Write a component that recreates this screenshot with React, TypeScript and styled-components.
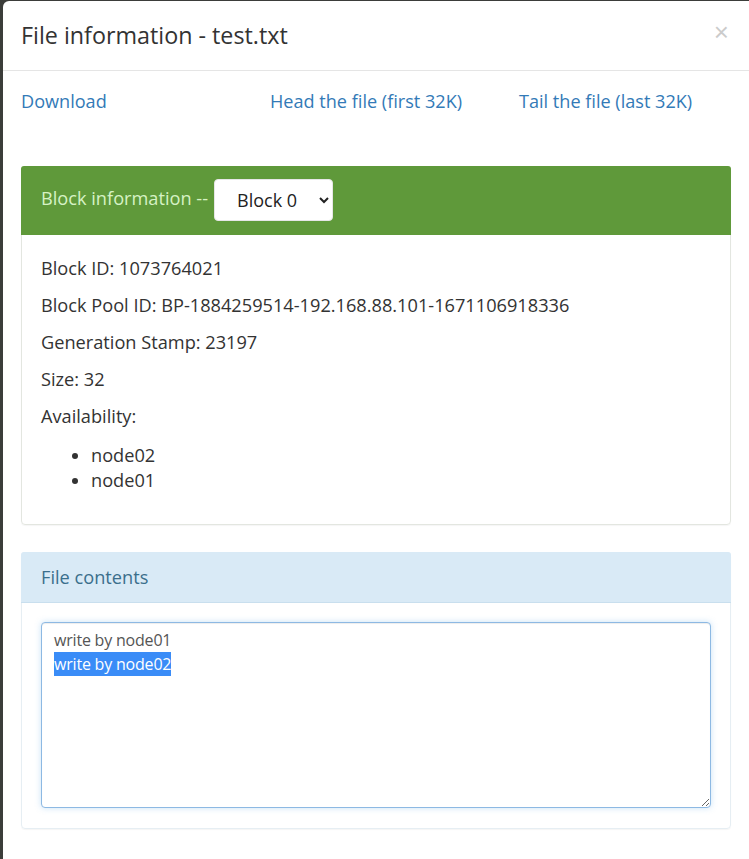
import React, { useEffect, useRef } from "react";
import styled, { createGlobalStyle } from "styled-components";

const Global = createGlobalStyle`
  html, body { margin: 0; padding: 0; }
  body {
    background: #3b3d3a;
    font-family: "Open Sans", "Noto Sans", sans-serif;
    color: #333;
    overflow: hidden;
  }
`;

const Modal = styled.div`
  margin: 1px 0 0 3px;
  background: #fff;
  border-top-left-radius: 6px;
  min-height: 858px;
`;

const Header = styled.div`
  height: 69px;
  border-bottom: 1px solid #e5e5e5;
  display: flex;
  align-items: center;
  justify-content: space-between;
  padding: 0 20px 0 18px;
`;

const Title = styled.h4`
  margin: 0;
  font-size: 23.3px;
  font-weight: 400;
  color: #333;
  line-height: 1;
`;

const Close = styled.button`
  border: 0;
  background: none;
  padding: 0;
  font-family: "Liberation Sans", Arial, sans-serif;
  font-size: 26px;
  font-weight: 400;
  color: #000;
  opacity: 0.2;
  line-height: 1;
  margin-top: -8px;
  cursor: pointer;
`;

const Body = styled.div`
  padding: 15px 15px 0 18px;
`;

const LinkRow = styled.div`
  display: grid;
  grid-template-columns: 249px 249px 1fr;
  height: 30px;
  align-items: center;
  margin-bottom: 50px;
`;

const Link = styled.a`
  color: #337ab7;
  font-size: 18.1px;
  text-decoration: none;
  white-space: nowrap;
`;

const Panel = styled.div<{ $tone: "success" | "info" }>`
  width: 710px;
  box-sizing: border-box;
  border: 1px solid ${(p) => (p.$tone === "success" ? "#e3e6e0" : "#e6eef3")};
  border-radius: 4px;
  margin-bottom: 27px;
  box-shadow: 0 1px 1px rgba(0, 0, 0, 0.04);
`;

const PanelHeading = styled.div<{ $tone: "success" | "info" }>`
  display: flex;
  align-items: center;
  box-sizing: border-box;
  margin: -1px -1px 0;
  border-top-left-radius: 3px;
  border-top-right-radius: 3px;
  padding: 0 20px;
  height: ${(p) => (p.$tone === "success" ? "69px" : "51px")};
  background: ${(p) => (p.$tone === "success" ? "#5f993a" : "#d9eaf6")};
  color: ${(p) => (p.$tone === "success" ? "#d6f2c4" : "#3b6f8c")};
  border-bottom: 1px solid ${(p) => (p.$tone === "success" ? "#5f993a" : "#c9dfee")};
  font-size: 18.2px;
`;

const HeadingLabel = styled.span`
  margin-top: -4px;
`;

const Select = styled.select`
  margin-left: 6px;
  height: 42px;
  width: 119px;
  border: 1px solid #e6e6e6;
  border-radius: 4px;
  background: #fff;
  font-family: inherit;
  font-size: 18px;
  color: #222;
  padding: 0 8px 0 18px;
`;

const PanelBody = styled.div<{ $pad: string }>`
  padding: ${(p) => p.$pad};
`;

const Line = styled.p`
  margin: 0 0 13px;
  font-size: 18.2px;
  line-height: 24px;
  color: #333;
`;

const NodeList = styled.ul`
  margin: 15px 0 10px;
  padding-left: 50px;
  font-size: 18.2px;
  line-height: 25px;
  color: #333;
`;

const TextArea = styled.textarea`
  display: block;
  box-sizing: border-box;
  width: 670px;
  height: 186px;
  border: 1px solid #8db9e3;
  border-radius: 4px;
  box-shadow: inset 0 1px 1px rgba(0, 0, 0, 0.075), 0 0 6px rgba(102, 175, 233, 0.35);
  outline: none;
  padding: 5px 12px;
  font-family: "Open Sans", "Noto Sans", sans-serif;
  font-size: 16px;
  letter-spacing: -0.2px;
  line-height: 24px;
  color: #555;
  resize: vertical;
  &::selection {
    background: #3a8cf7;
    color: #fff;
  }
`;

const content = "write by node01\nwrite by node02";

export default function App() {
  const ref = useRef<HTMLTextAreaElement>(null);
  useEffect(() => {
    const t = ref.current;
    if (t) {
      t.focus();
      t.setSelectionRange(16, 31);
    }
  }, []);
  return (
    <>
      <Global />
      <Modal>
        <Header>
          <Title>File information - test.txt</Title>
          <Close aria-label="Close">×</Close>
        </Header>
        <Body>
          <LinkRow>
            <Link href="#">Download</Link>
            <Link href="#">Head the file (first 32K)</Link>
            <Link href="#">Tail the file (last 32K)</Link>
          </LinkRow>
          <Panel $tone="success">
            <PanelHeading $tone="success">
              <HeadingLabel>Block information --</HeadingLabel>
              <Select defaultValue="0">
                <option value="0">Block 0</option>
              </Select>
            </PanelHeading>
            <PanelBody $pad="21px 19px 21px 19px">
              <Line>Block ID: 1073764021</Line>
              <Line>Block Pool ID: BP-1884259514-192.168.88.101-1671106918336</Line>
              <Line>Generation Stamp: 23197</Line>
              <Line>Size: 32</Line>
              <Line style={{ marginBottom: 0 }}>Availability:</Line>
              <NodeList>
                <li>node02</li>
                <li>node01</li>
              </NodeList>
            </PanelBody>
          </Panel>
          <Panel $tone="info">
            <PanelHeading $tone="info">File contents</PanelHeading>
            <PanelBody $pad="19px 19px 20px 19px">
              <TextArea ref={ref} defaultValue={content} readOnly />
            </PanelBody>
          </Panel>
        </Body>
      </Modal>
    </>
  );
}
